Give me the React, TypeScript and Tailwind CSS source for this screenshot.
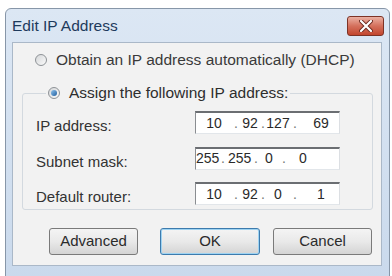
import React from "react";

const font = { fontFamily: '"Liberation Sans", Arial, sans-serif' };

function Radio({ checked }: { checked?: boolean }) {
  return (
    <span className="flex h-[12px] w-[12px] shrink-0 items-center justify-center rounded-full border border-[#8e9296] bg-gradient-to-br from-[#d6d8da] to-[#fafafa]">
      {checked && (
        <span className="h-[6px] w-[6px] rounded-full bg-gradient-to-br from-[#8fc4ee] to-[#1f5f9e]" />
      )}
    </span>
  );
}

function IpBox({ parts, cols }: { parts: string[]; cols: string[] }) {
  // cols: widths for seg, dot, seg, dot, seg, dot, seg
  return (
    <div className="flex h-[23px] w-[145px] items-center border border-b-[#e2e6ea] border-l-[#8a8d91] border-r-[#dcdfe3] border-t-2 border-t-[#6b6e72] bg-white text-[14px] text-[#2a2a2a]">
      {parts.map((p, i) => (
        <React.Fragment key={i}>
          <span className={`${cols[i * 2]} shrink-0 text-center`}>{p}</span>
          {i < 3 && <span className={`${cols[i * 2 + 1]} shrink-0 text-center text-[#777]`}>.</span>}
        </React.Fragment>
      ))}
    </div>
  );
}

const btn =
  "flex h-[27px] items-center justify-center rounded-[3px] border text-[15px] text-[#2b2b2b] bg-gradient-to-b from-[#f4f4f4] via-[#e9e9e9] to-[#d4d4d4]";

export default function App() {
  const rows = [
    {
      label: "IP address:",
      parts: ["10", "92", "127", "69"],
      cols: ["w-[36px]", "w-[8px]", "w-[20px]", "w-[6px]", "w-[24px]", "w-[10px]", "w-[42px]"],
    },
    {
      label: "Subnet mask:",
      parts: ["255", "255", "0", "0"],
      cols: ["w-[22px]", "w-[10px]", "w-[22px]", "w-[12px]", "w-[14px]", "w-[16px]", "w-[22px]"],
    },
    {
      label: "Default router:",
      parts: ["10", "92", "0", "1"],
      cols: ["w-[36px]", "w-[8px]", "w-[20px]", "w-[6px]", "w-[24px]", "w-[10px]", "w-[42px]"],
    },
  ];

  return (
    <div className="h-[276px] w-[392px] overflow-hidden bg-white pl-[5px] pr-[2px] pt-[8px]" style={font}>
      <div className="flex h-[280px] flex-col rounded-t-[6px] border border-[#8796a8] bg-gradient-to-b from-[#dce7f4] to-[#c9d9ec]">
        {/* title bar */}
        <div className="flex h-[33px] shrink-0 items-center justify-between pl-[6px] pr-[5px]">
          <span className="text-[15.5px] text-[#1e3a5c]">Edit IP Address</span>
          <div className="flex h-[20px] w-[37px] items-center justify-center rounded-[3px] border border-[#7d3326] bg-gradient-to-b from-[#eab0a3] via-[#d4705c] to-[#c2452d]">
            <svg width="14" height="12" viewBox="0 0 14 12">
              <path d="M2 1 L12 11 M12 1 L2 11" stroke="#6b2a20" strokeWidth="4" strokeLinecap="round" />
              <path d="M2 1 L12 11 M12 1 L2 11" stroke="#ffffff" strokeWidth="2.2" strokeLinecap="round" />
            </svg>
          </div>
        </div>

        {/* client area */}
        <div className="ml-[6px] mr-[7px] flex h-[224px] shrink-0 flex-col border border-[#aab8c8] bg-[#f2f2f2]">
          <div className="mt-[8px] flex h-[18px] items-center gap-[9px] pl-[22px]">
            <Radio />
            <span className="text-[15.5px] text-[#3a3a3a]">Obtain an IP address automatically (DHCP)</span>
          </div>

          <fieldset className="ml-[9px] mr-[8px] mt-[15px] rounded-[3px] border border-[#d3d9df] pb-[4px] pl-[13px]">
            <legend className="ml-[10px] flex h-[18px] items-center gap-[9px] px-[2px]">
              <Radio checked />
              <span className="text-[15.5px] text-[#2e2e2e]">Assign the following IP address:</span>
            </legend>
            <div className="flex flex-col gap-[12.5px] pt-[9px]">
              {rows.map((r) => (
                <div key={r.label} className="flex h-[23px] items-center">
                  <span className="w-[159px] pt-[8px] text-[15px] text-[#333]">{r.label}</span>
                  <IpBox parts={r.parts} cols={r.cols} />
                </div>
              ))}
            </div>
          </fieldset>

          <div className="mt-[18px] flex pl-[36px]">
            <div className={`${btn} w-[89px] border-[#7a7a7a]`}>Advanced</div>
            <div className={`${btn} ml-[22px] w-[100px] border-[#3d7bad] shadow-[inset_0_0_0_1px_#9ed3f2]`}>OK</div>
            <div className={`${btn} ml-[13px] w-[99px] border-[#7a7a7a]`}>Cancel</div>
          </div>
        </div>
      </div>
    </div>
  );
}
